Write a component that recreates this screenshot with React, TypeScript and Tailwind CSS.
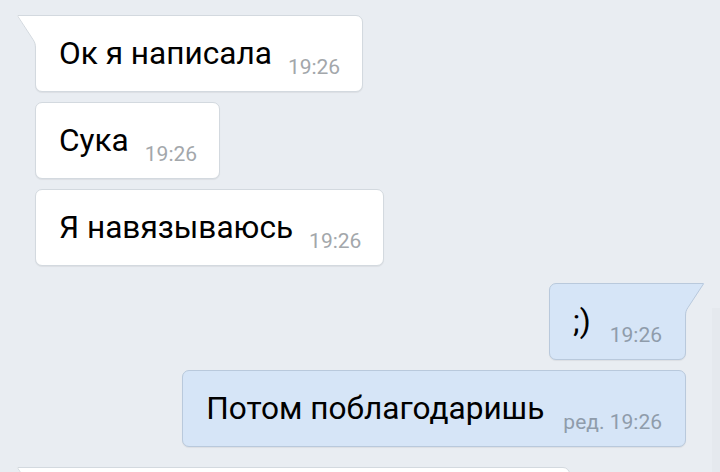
import React from "react";

type BubbleProps = {
  text: string;
  time: string;
  out?: boolean;
  tail?: boolean;
};

function Tail({ out }: { out?: boolean }) {
  const fill = out ? "#d6e5f7" : "#ffffff";
  const stroke = out ? "#b9c9dc" : "#d3d9df";
  return (
    <svg
      width="21"
      height="42"
      viewBox="0 0 21 42"
      className={
        out
          ? "absolute -right-[20px] -top-[1px] -scale-x-100"
          : "absolute -left-[20px] -top-[1px]"
      }
    >
      <path
        d="M1 0 L21 0 L21 42 L19.5 42 L19.5 33 C19.5 29.5 18.8 27 17 24.5 L1.2 1.2 Z"
        fill={fill}
      />
      <path
        d="M1.5 0.5 L21 0.5 M1.5 0.8 L17 24.5 C18.8 27 19.5 29.5 19.5 33 L19.5 42"
        fill="none"
        stroke={stroke}
        strokeWidth="1"
      />
    </svg>
  );
}

function Bubble({ text, time, out, tail }: BubbleProps) {
  return (
    <div
      className={[
        "relative flex items-end rounded-[7px] border pt-[19px] pb-[11px] pl-[23px] shadow-[0_1px_1px_rgba(0,0,0,0.06)]",
        out
          ? "self-end bg-[#d6e5f7] border-[#b9c9dc] pr-[23px]"
          : "self-start bg-white border-[#d3d9df] pr-[22px]",
        tail ? (out ? "rounded-tr-none" : "rounded-tl-none") : "",
      ].join(" ")}
    >
      <span className="text-[31.6px] leading-[38px] mb-[7px] text-black whitespace-nowrap">
        {text}
      </span>
      <span
        className={[
          "text-[21px] leading-[25px] whitespace-nowrap",
          out ? "ml-[19px] text-[#8f9cab]" : "ml-[16px] text-[#a3a7ab]",
        ].join(" ")}
      >
        {time}
      </span>
      {tail && <Tail out={out} />}
    </div>
  );
}

export default function App() {
  return (
    <div className="relative w-[720px] h-[472px] overflow-hidden bg-[#e9edf2] font-['Roboto',sans-serif]">
      <div className="flex flex-col pt-[15px] pl-[35px] pr-[34px]">
        <div className="flex flex-col gap-[10px]">
          <Bubble text="Ок я написала" time="19:26" tail />
          <Bubble text="Сука" time="19:26" />
          <Bubble text="Я навязываюсь" time="19:26" />
        </div>
        <div className="mt-[17px] flex flex-col gap-[10px]">
          <Bubble text=";)" time="19:26" out tail />
          <Bubble text="Потом поблагодаришь" time="ред. 19:26" out />
        </div>
        <div className="mt-[20px] flex flex-col">
          <div className="relative self-start w-[535px] h-[60px] rounded-[7px] rounded-tl-none border border-[#d3d9df] bg-white">
            <Tail />
          </div>
        </div>
      </div>
      <div className="absolute right-0 top-[308px] bottom-0 w-[8px] bg-[#e5e9ee]" />
    </div>
  );
}
